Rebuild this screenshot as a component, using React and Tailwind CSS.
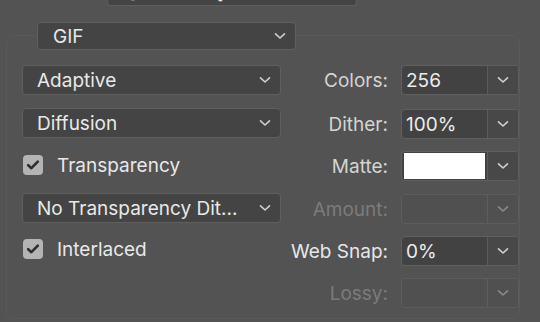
import React from "react";

function Chevron({ className = "" }) {
  return (
    <svg width="12" height="8" viewBox="0 0 12 8" className={className}>
      <path d="M1.5 1.8 L6 6 L10.5 1.8" fill="none" stroke="currentColor" strokeWidth="1.6" strokeLinecap="round" strokeLinejoin="round" />
    </svg>
  );
}

function Select({ label, className = "" }) {
  return (
    <div className={`h-[30px] w-[259px] flex items-center justify-between rounded-[4px] border border-[#5f5f5f] bg-[#444444] pl-[14px] pr-[9px] ${className}`}>
      <span className="text-[#e8e8e8] whitespace-nowrap">{label}</span>
      <Chevron className="text-[#cfcfcf]" />
    </div>
  );
}

function Check({ label }) {
  return (
    <div className="h-[30px] flex items-center">
      <div className="ml-[1px] w-[20px] h-[20px] rounded-[4px] bg-[#b4b4b4] flex items-center justify-center">
        <svg width="14" height="12" viewBox="0 0 14 12">
          <path d="M2.2 6.2 L5.4 9.2 L11.8 2.6" fill="none" stroke="#2e2e2e" strokeWidth="2.6" strokeLinecap="round" strokeLinejoin="round" />
        </svg>
      </div>
      <span className="ml-[14px] text-[#e8e8e8]">{label}</span>
    </div>
  );
}

function Combo({ label, value, disabled, white, labelClass = "" }) {
  return (
    <div className="h-[30px] flex items-center">
      <span className={`w-[99px] text-right whitespace-nowrap ${disabled ? "text-[#7b7b7b]" : "text-[#d4d4d4]"} ${labelClass}`}>{label}</span>
      <div className={`ml-[13px] h-[30px] w-[118px] flex rounded-[4px] border ${disabled ? "border-[#5d5d5d] bg-[#505050]" : "border-[#606060] bg-[#424242]"}`}>
        <div className="flex-1 flex items-center pl-[4px] py-[1px] pr-[0px]">
          {white ? (
            <div className="w-full h-[26px] bg-white ml-[-2px]" />
          ) : (
            <span className="text-[#ececec]">{value}</span>
          )}
        </div>
        <div className={`w-[31px] flex items-center justify-center border-l ${disabled ? "border-[#5d5d5d] text-[#8a8a8a]" : "border-[#5a5a5a] bg-[#484848] text-[#d0d0d0]"} rounded-r-[3px]`}>
          <Chevron />
        </div>
      </div>
    </div>
  );
}

export default function App() {
  return (
    <div
      className="w-[540px] h-[322px] bg-[#535353] overflow-hidden text-[19px] leading-none"
      style={{ fontFamily: "Inter, 'Liberation Sans', sans-serif" }}
    >
      <div className="ml-[107px] w-[250px] h-[6px] overflow-hidden rounded-b-[4px] border border-t-0 border-[#5f5f5f] bg-[#444444]">
        <div className="mt-[-16px] pl-[21px] text-[#e8e8e8] leading-[18px] text-[18px]">[Unnamed]</div>
      </div>
      <div className="mt-[29px] ml-[6px] w-[514px] h-[284px] rounded-[7px] border border-[#595959]">
        <div className="ml-[30px] mt-[-14px] w-[259px] h-[28px] flex items-center justify-between rounded-[4px] border border-[#5f5f5f] bg-[#444444] pl-[15px] pr-[9px]">
          <span className="text-[#e8e8e8]">GIF</span>
          <Chevron className="text-[#cfcfcf]" />
        </div>
        <div className="mt-[15px] pl-[15px] flex">
          <div className="w-[259px] flex flex-col">
            <Select label="Adaptive" />
            <div className="mt-[13px]"><Select label="Diffusion" /></div>
            <div className="mt-[12px]"><Check label="Transparency" /></div>
            <div className="mt-[13px]"><Select label="No Transparency Dit..." /></div>
            <div className="mt-[11px]"><Check label="Interlaced" /></div>
          </div>
          <div className="ml-[8px] flex flex-col">
            <Combo label="Colors:" value="256" />
            <div className="mt-[14px]"><Combo label="Dither:" value="100%" /></div>
            <div className="mt-[12px]"><Combo label="Matte:" white /></div>
            <div className="mt-[13px]"><Combo label="Amount:" disabled /></div>
            <div className="mt-[12px]"><Combo label="Web Snap:" value="0%" labelClass="!text-[#e6e6e6]" /></div>
            <div className="mt-[12px]"><Combo label="Lossy:" disabled /></div>
          </div>
        </div>
      </div>
    </div>
  );
}
